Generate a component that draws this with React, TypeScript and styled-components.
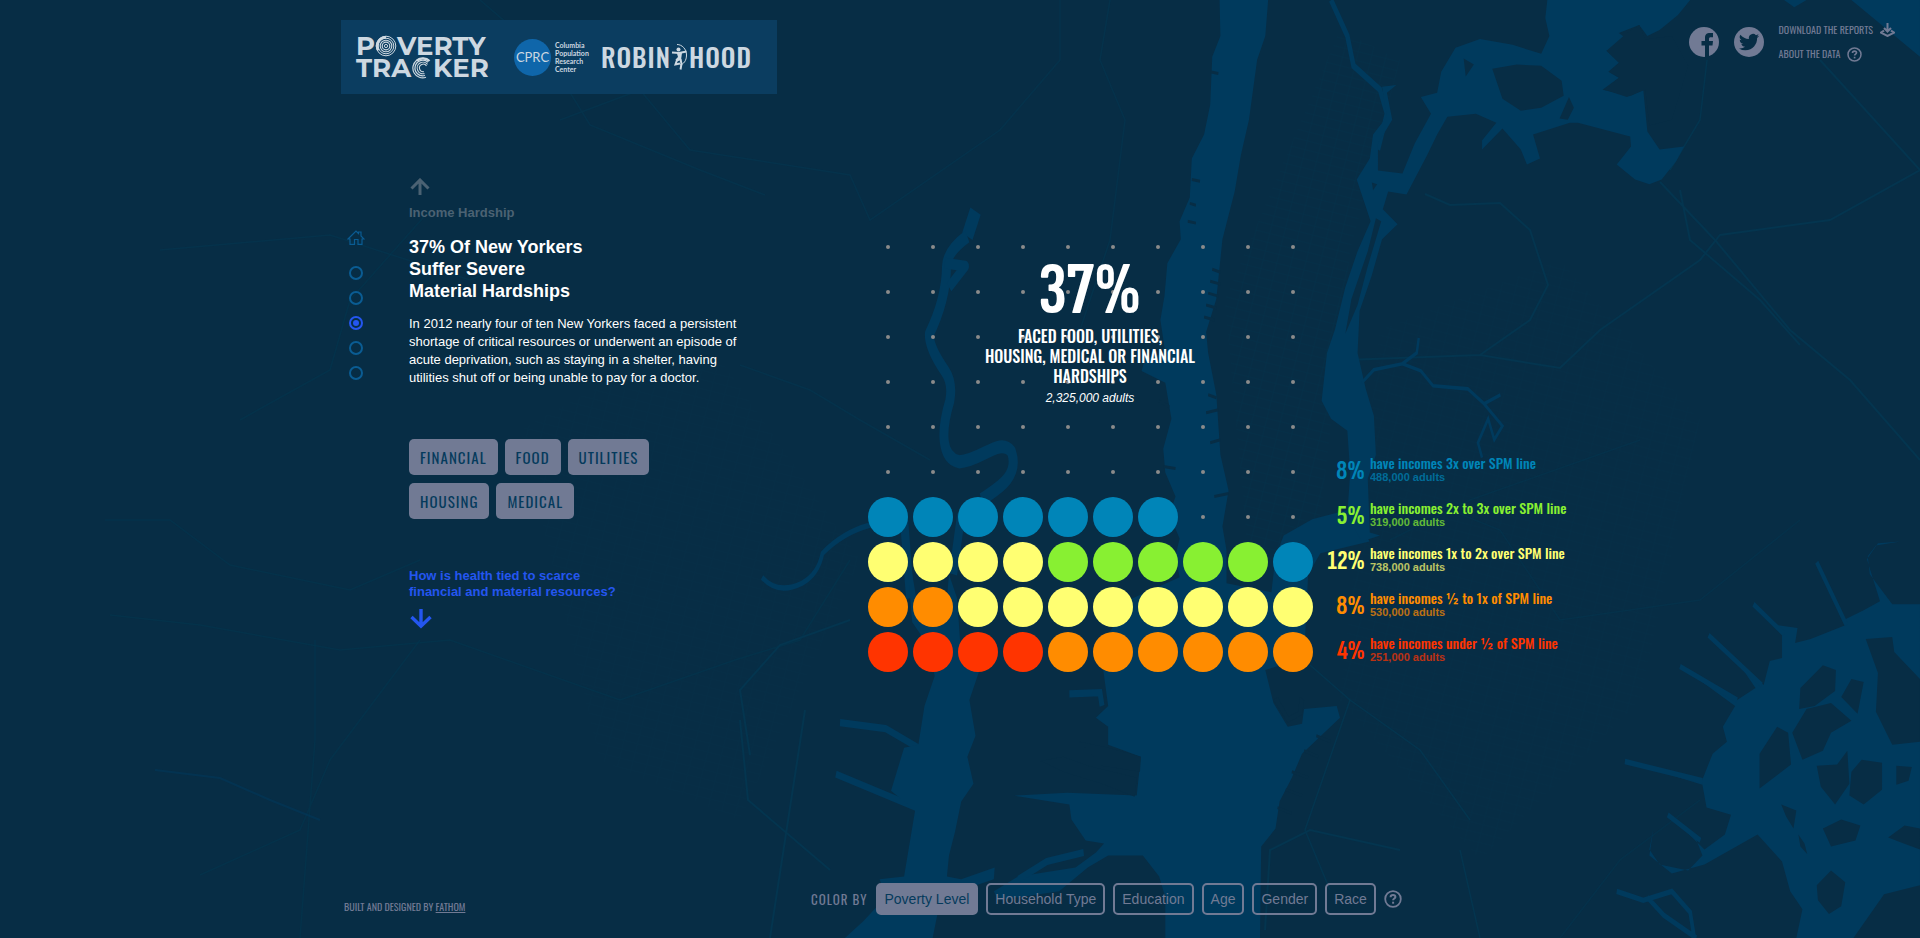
import React, { useState } from 'react';
import styled, { createGlobalStyle } from 'styled-components';

const ink = '#717a94';
const land = '#072d45';
const water = '#003a5d';
const road = '#04354f';
const sans = `"Liberation Sans", Arial, sans-serif`;
const condensed = `Oswald, "Roboto Condensed", "Liberation Sans", sans-serif`;
const numerals = `"Sofia Sans Extra Condensed", Oswald, "Roboto Condensed", sans-serif`;

const GlobalStyle = createGlobalStyle`
  *, *::before, *::after { box-sizing: border-box; }
  body { margin: 0; background: ${land}; font-family: ${sans}; color: #fff; }
  h1, h2, p, ul, ol { margin: 0; padding: 0; }
  ul, ol { list-style: none; }
  button { font: inherit; cursor: pointer; }
  a { color: inherit; text-decoration: none; }
`;

const Page = styled.div`
  position: relative;
  display: flex;
  flex-direction: column;
  min-height: 100vh;
  isolation: isolate;
  overflow: hidden;
`;

const MapBackdrop = styled.svg`
  position: absolute;
  inset: 0;
  z-index: -1;
  width: 100%;
  height: 100%;
`;

const Columns = styled.div`
  display: grid;
  grid-template-columns: 1fr minmax(0, 1238px) 1fr;
`;

const Header = styled(Columns).attrs({ as: 'header' })`
  align-items: start;
  padding-top: 20px;
`;

const Brands = styled.div`
  grid-column: 2;
  justify-self: start;
  display: flex;
  align-items: center;
  height: 74px;
  padding: 0 25px 0 15px;
  background: #0b3d60;
  color: #cdd8e1;
`;

const TrackerLogo = styled.a`
  display: block;
  width: 136px;
  margin-right: 22px;
  font: 700 26px/22px Montserrat, Lato, "Liberation Sans", sans-serif;
`;

const LogoLine = styled.span`
  display: flex;
  align-items: center;
`;

const Swirl = styled.svg`
  flex: none;
  width: 22px;
  height: 22px;
`;

const Columbia = styled.a`
  display: flex;
  align-items: center;
  gap: 4px;
  width: 87px;
`;

const Disc = styled.span`
  display: grid;
  place-items: center;
  flex: none;
  width: 37px;
  height: 37px;
  border-radius: 50%;
  background: #0f66aa;
  font: 400 13px/16px Lato, sans-serif;
`;

const DiscCaption = styled.span`
  font: 700 7px/8px Lato, sans-serif;
`;

const RobinHood = styled.a`
  display: flex;
  align-items: center;
  font: 500 26px/36px ${condensed};
  letter-spacing: 1px;
`;

const Archer = styled.svg`
  width: 18px;
  height: 28px;
`;

const TopNav = styled.nav`
  justify-self: end;
  display: flex;
  gap: 15px;
  padding-right: 25px;
  color: ${ink};
`;

const Social = styled.a`
  width: 30px;
  height: 30px;
  margin-top: 7px;
  svg { display: block; }
`;

const TopLinks = styled.ul`
  display: grid;
  gap: 8px;
  margin-top: 2px;
  font: 400 10px/16px ${condensed};
`;

const TopLink = styled.a`
  display: flex;
  align-items: center;
  gap: 7px;
  height: 16px;
`;

const Main = styled(Columns).attrs({ as: 'main' })`
  flex: 1;
  padding-top: 84px;
`;

const Stage = styled.div`
  grid-column: 2;
  display: grid;
  grid-template-columns: 68px minmax(360px, 456px) 450px minmax(264px, 1fr);
  align-items: start;
`;

const Steps = styled.ol`
  display: flex;
  flex-direction: column;
  align-items: center;
  gap: 11px;
  width: 30px;
  margin-top: 52px;
`;

const HomeItem = styled.li`
  height: 16px;
  margin-bottom: 9px;
`;

const Step = styled.a<{ $active?: boolean }>`
  display: grid;
  place-items: center;
  width: 14px;
  height: 14px;
  border: 2px solid ${p => (p.$active ? '#2456f0' : '#0a5c93')};
  border-radius: 50%;
  &::after {
    content: '';
    width: 6px;
    height: 6px;
    border-radius: 50%;
    background: ${p => (p.$active ? '#2456f0' : 'transparent')};
  }
`;

const Story = styled.article`
  display: flex;
  flex-direction: column;
  align-items: flex-start;
  max-width: 340px;
`;

const StepLink = styled.a<{ $tone: string }>`
  display: flex;
  flex-direction: column;
  gap: 9px;
  color: ${p => p.$tone};
  font-weight: 700;
  font-size: 13px;
  line-height: 16px;
  svg { display: block; margin-left: 1px; }
`;

const Title = styled.h1`
  margin-top: 15px;
  font-size: 18px;
  line-height: 22px;
`;

const Body = styled.p`
  margin-top: 13px;
  font-size: 13px;
  line-height: 18px;
  white-space: nowrap;
`;

const Topics = styled.div`
  display: flex;
  flex-wrap: wrap;
  gap: 8px 7px;
  max-width: 260px;
  margin: 52px 0 49px;
`;

const Topic = styled.button`
  height: 36px;
  padding: 0 11px;
  border: 0;
  border-radius: 5px;
  background: ${ink};
  color: #053a5c;
  font: 400 15px/36px ${condensed};
  letter-spacing: 1px;
`;

const Chart = styled.section`
  position: relative;
  margin-top: 46px;
`;

const DotGrid = styled.div`
  display: grid;
  grid-template-columns: repeat(10, 45px);
  grid-auto-rows: 45px;
  place-items: center;
`;

const Dot = styled.span<{ $color?: string }>`
  width: ${p => (p.$color ? 40 : 4)}px;
  height: ${p => (p.$color ? 40 : 4)}px;
  border-radius: 50%;
  background: ${p => p.$color ?? '#8b8b8b'};
`;

const Headline = styled.div`
  position: absolute;
  top: 31px;
  left: 0;
  right: 0;
  text-align: center;
`;

const BigNumber = styled.div`
  font: 700 75px/71px ${numerals};
`;

const Claim = styled.h2`
  font: 500 16px/20px ${condensed};
`;

const Adults = styled.p`
  font-size: 12px;
  line-height: 24px;
  font-style: italic;
`;

const Legend = styled.ul`
  display: grid;
  grid-auto-rows: 45px;
  margin-top: 270px;
`;

const LegendRow = styled.li<{ $color: string }>`
  display: grid;
  grid-template-columns: 50px 1fr;
  column-gap: 5px;
  align-items: center;
  color: ${p => p.$color};
`;

const Share = styled.strong`
  text-align: right;
  font: 700 28px/30px ${numerals};
`;

const Meaning = styled.span`
  display: block;
  font: 500 14px/16px ${condensed};
  white-space: nowrap;
`;

const Count = styled.span`
  display: block;
  margin-bottom: 4px;
  font: 700 11px/12px ${sans};
  opacity: 0.72;
`;

const Footer = styled(Columns).attrs({ as: 'footer' })`
  padding-bottom: 23px;
  color: ${ink};
`;

const FooterBar = styled.div`
  grid-column: 2;
  display: grid;
  grid-template-columns: 467px 1fr;
  align-items: center;
  padding-left: 3px;
`;

const Credit = styled.p`
  margin-top: 17px;
  font: 400 10px/16px ${condensed};
  a { text-decoration: underline; }
`;

const ColorBy = styled.div`
  display: flex;
  align-items: center;
  gap: 8px;
`;

const ColorLabel = styled.span`
  font: 400 13px/20px ${condensed};
  letter-spacing: 1px;
`;

const ColorButton = styled.button<{ $active: boolean }>`
  height: 32px;
  padding: 0 7px;
  border: 2px solid ${ink};
  border-radius: 5px;
  background: ${p => (p.$active ? ink : 'transparent')};
  color: ${p => (p.$active ? '#053a5c' : ink)};
  font: 400 14px/28px ${sans};
`;

const HelpButton = styled.button`
  width: 18px;
  height: 18px;
  padding: 0;
  border: 0;
  background: none;
  color: ${ink};
  svg { display: block; }
`;

const levels = [
  { color: '#ff3400', share: 4, text: 'have incomes under ½ of SPM line', adults: '251,000 adults' },
  { color: '#ff8c00', share: 8, text: 'have incomes ½ to 1x of SPM line', adults: '530,000 adults' },
  { color: '#ffff72', share: 12, text: 'have incomes 1x to 2x over SPM line', adults: '738,000 adults' },
  { color: '#88f032', share: 5, text: 'have incomes 2x to 3x over SPM line', adults: '319,000 adults' },
  { color: '#0085b8', share: 8, text: 'have incomes 3x over SPM line', adults: '488,000 adults' },
];

// One entry per percent, filled from the bottom row upwards.
const filled = levels.flatMap(l => Array<string>(l.share).fill(l.color));
const dots = Array.from({ length: 100 }, (_, i) => {
  const row = 9 - Math.floor(i / 10);
  return filled[row * 10 + (i % 10)];
});

const topics = ['FINANCIAL', 'FOOD', 'UTILITIES', 'HOUSING', 'MEDICAL'];
const modes = ['Poverty Level', 'Household Type', 'Education', 'Age', 'Gender', 'Race'];

function Help({ size }: { size: number }) {
  return (
    <svg width={size} height={size} viewBox="0 0 18 18" fill="none" stroke="currentColor" strokeWidth="2">
      <circle cx="9" cy="9" r="7.8" strokeWidth="1.8" />
      <path d="M6.6 7.2c0-1.5 1-2.3 2.4-2.3s2.4.8 2.4 2c0 1.6-2.3 1.6-2.3 3.4" />
      <path d="M9.1 11.7v2" />
    </svg>
  );
}

function Rings({ open }: { open?: boolean }) {
  return (
    <Swirl viewBox="0 0 22 22" fill="none" stroke="currentColor" aria-hidden="true">
      {open ? (
        <>
          <path d="M18 3.600A9.800 9.800 0 1 0 15 20.300" strokeWidth="1.200" />
          <path d="M17 5.200A7.800 7.800 0 1 0 14 18.500" strokeWidth="1.200" />
          <path d="M16.500 7.400A5.800 5.800 0 1 0 13.500 16.600" strokeWidth="1.100" />
          <path d="M15.500 9A3.800 3.800 0 1 0 13 14.700" strokeWidth="1.100" />
          <path d="M6 3.500A9.500 9.500 0 0 1 18.500 4" strokeWidth="2.400" />
        </>
      ) : (
        <>
          <circle cx="11" cy="11" r="9.800" strokeWidth="1" />
          <circle cx="11" cy="11" r="7.800" strokeWidth="1" />
          <circle cx="11" cy="11" r="5.800" strokeWidth="1.100" />
          <circle cx="11" cy="11" r="3.800" strokeWidth="1.200" />
          <circle cx="11" cy="11" r="1.600" strokeWidth="1" />
          <path d="M11 2.200A8.800 8.800 0 0 0 3.400 15.400" strokeWidth="2.600" />
        </>
      )}
    </Swirl>
  );
}

function CityMap() {
  return (
    <MapBackdrop viewBox="0 0 1920 938" preserveAspectRatio="xMidYMid slice" aria-hidden="true">
      <defs>
        <pattern id="streets" width="14" height="9" patternUnits="userSpaceOnUse" patternTransform="rotate(14)">
          <path d="M0 .5H14M.5 0V9" stroke="#053149" strokeWidth="1" fill="none" opacity=".7" />
        </pattern>
      </defs>
      <rect width="1920" height="938" fill={land} />
      <path fill="url(#streets)" d="M1225 300 1340 30 1400 60 1350 250 1320 520 1250 575Z" />
      <path fill="url(#streets)" d="M1380 330 1560 260 1700 420 1640 700 1480 860 1340 700Z" opacity=".6" />
      <path fill="url(#streets)" d="M520 430 700 330 860 560 740 820 600 760Z" opacity=".5" />
      <g fill="none" stroke={road} strokeWidth="1.5">
        <path d="M480 0 550 60 590 125 700 170 765 195M560 120 640 90 690 150 850 175 870 220 1000 130 1060 60 1060 0" opacity=".7" />
        <path d="M1110 0 1100 60 1125 120 1110 240 1080 330M740 365 810 390 860 420 930 460M160 250 330 235 470 280 560 245" opacity=".7" />
        <path d="M105 520 170 520 230 565 350 590 420 560M110 615 200 625 340 650 450 640 620 700 735 660 800 640 850 560" opacity=".6" />
        <path d="M240 420 330 370 350 300 430 210M200 875 300 830 330 760 420 640M315 640 315 740 300 938" opacity=".6" />
        <path d="M750 755 740 690 780 645 850 620M805 710 770 938M740 720 748 800 830 870" strokeWidth="2" />
        <path d="M1425 194 1450 205 1500 203 1530 230 1548 285 1530 320 1480 355M1345 360 1480 355 1560 368 1600 330 1700 260 1720 235 1830 220 1920 170" strokeWidth="2" />
        <path d="M1660 182 1715 240 1790 330 1850 380 1920 460M1680 190 1690 240 1760 300 1800 345M1820 60 1870 115 1920 170" strokeWidth="2" />
        <path d="M1707 60 1700 120 1670 170M1310 665 1350 700 1305 830 1330 890M1350 700 1420 750 1470 820M1480 938 1460 850" />
        <path d="M1425 500 1500 530 1560 620 1700 600 1800 520M1560 938 1620 860 1700 800M1390 540 1470 500 1640 440" opacity=".5" />
        <path d="M1265 930 1270 850 1310 830 1400 850" strokeWidth="2" />
      </g>
      <path d="M155 770 220 778 270 800 320 820" fill="none" stroke={water} strokeWidth="2" opacity=".5" />

      {/* Hackensack, Newark Bay, the Hudson and the harbor */}
      <g transform="translate(700 0) scale(.40816 .59821)" fill={water}>
        <g fill="none" stroke={water} strokeLinejoin="round">
          <path d="M675 353 655 395" strokeWidth="28" />
          <path d="M655 395Q605 420 604 445 603 500 562 558 560 580 600 620 620 640 612 670C590 720 590 765 635 772 690 770 735 730 763 755 785 800 720 820 690 835" strokeWidth="22" />
          <path d="M600 440 650 445 610 480" strokeWidth="18" />
          <path d="M152 965Q190 995 250 975 290 960 300 925 350 890 415 878L500 870" strokeWidth="9" />
          <path d="M500 870 515 1000M640 860 620 960" strokeWidth="20" />
          <path d="M343 1208 455 1218 535 1250M333 1294 530 1350" strokeWidth="12" />
        </g>
        <path d="M493 900 510 960 520 1040 560 1080 575 1130 550 1180 535 1245 500 1250 468 1322 527 1355 500 1465 440 1470 455 1500 400 1540 355 1568H570L590 1500 720 1470 722 1450 640 1470 605 1465 610 1430 625 1390 640 1340 670 1310 655 1265 675 1230 660 1170 685 1120 640 1100 630 1000 610 960 600 1040 540 1040 520 960Z" />
        <path d="M1273 0 1275 60 1255 95 1250 175 1235 225 1205 265 1200 330 1175 370 1178 400 1145 440 1138 495 1128 535 1140 590 1090 600 1082 620 1140 640 1155 700 1135 750 1140 790 1165 830 1150 860 1175 900 1165 930 1175 965 1060 1000 980 1080 1000 1180 970 1200 1000 1215 1000 1245 1080 1265 1070 1330 900 1325 770 1330 905 1345 910 1370 945 1405 990 1410 970 1425 920 1450 780 1465 720 1490 730 1505 880 1490 950 1450 1000 1430 1085 1430 1125 1465 1140 1500 1140 1568H1372L1375 1415 1410 1385 1420 1340 1450 1300 1475 1260 1568 1200 1560 1180 1480 1185 1475 1210 1440 1215 1405 1175 1385 1120 1480 1100 1490 960 1520 925 1640 905 1600 850 1500 868 1430 895 1410 930 1400 990 1290 975 1290 920 1280 880 1295 820 1275 760 1265 660 1245 590 1240 555 1265 500 1280 400 1310 320 1325 260 1345 200 1365 100 1385 60 1392 0Z" />
        <path d="M905 1160 980 1158 985 1180M780 1470 850 1440 940 1425" fill="none" stroke={water} strokeWidth="12" />
        <g fill={land}>
          <path d="M930 1240 1000 1250 1080 1265 1078 1290 985 1280ZM835 1272 890 1265 950 1280 1070 1300 1065 1332 985 1310 890 1290Z" />
          <path d="M1405 1170 1440 1208 1475 1195 1480 1170 1470 1165 1465 1190 1442 1198 1415 1165Z" />
        </g>
        <g stroke={land} strokeWidth="5" fill="none">
          <path d="M1255 450 1275 455M1250 470 1275 475M1245 490 1270 495M1240 510 1265 515M1235 530 1260 535M1240 690 1270 685M1245 660 1265 665M1250 740 1275 735M1260 830 1295 825" />
          <path d="M1205 300 1225 303M1200 340 1215 343M1195 370 1215 373M1150 680 1125 670M1135 780 1165 783M1150 860 1170 864M1250 120 1270 123" />
          <path d="M1450 1290 1490 1300M1435 1320 1475 1330M1415 1350 1450 1360M1480 1255 1515 1265M1510 1230 1545 1240" />
        </g>
      </g>

      {/* Harlem and East Rivers, the Sound and Jamaica Bay */}
      <g transform="translate(1280 0) scale(.40816 .59821)" fill={water}>
        <path d="M125 0 165 60 180 110 245 150 262 190 240 250" fill="none" stroke={water} strokeWidth="11" />
        <path d="M188 300 220 265 228 225 262 195 250 145 285 142 262 155 275 200 240 240 240 285 300 290 330 240 370 190 345 162 385 155 395 120 430 80 490 65 570 75 640 90 660 60 650 30 655 0H1005L975 25 930 50 900 60 880 42 830 55 860 70 800 85 830 105 805 120 830 130 790 150 860 160 890 150 900 220 930 250 990 245 970 270 935 300 905 308 870 300 825 275 860 245 858 228 730 205 710 205 620 225 637 265 605 275 590 250 545 215 495 250 495 235 530 205 480 190 410 195 385 225 360 260 310 325 265 320 252 350 288 375 250 400 225 460 195 520 190 590 210 650 230 695 235 760 215 800 220 890 245 895 200 905 165 860 172 790 165 720 125 700 102 670 115 590 135 550 160 480 190 420 222 370Z" />
        <path d="M1235 0 1260 12 1290 0ZM1400 0 1568 95V0Z" />
        <path d="M200 640 230 618 300 608 345 620 375 645 460 650 500 675 540 660M500 675 545 712 525 735 510 700 485 740 495 765M300 608 335 590 340 565" fill="none" stroke={water} strokeWidth="6" />
        <g fill={land}>
          <path d="M520 115 580 108 640 110 690 135 695 160 640 180 590 185 545 165ZM450 98 475 108 455 128ZM708 162 720 180 705 200 685 198Z" />
          <path d="M850 55 880 42 895 66 960 60 1000 110 960 200 905 210 895 150 850 162 795 150 832 130 805 120 832 105 800 85Z" />
          <path d="M160 558 175 500 215 420 235 365 248 370 215 445 190 510Z" />
          <path d="M225 305 238 308 228 318Z" />
        </g>
        <path d="M1568 1010 1500 1010 1445 960 1440 930 1460 912 1520 905 1465 908 1438 935 1470 1005 1430 1020 1385 1035 1315 940 1385 1045 1300 1068 1262 1075 1268 1050 1220 1045 1160 1008 1230 1060 1230 1100 1200 1105 1185 1145 1050 1060 1140 1125 1165 1150 1120 1170 980 1113 1115 1180 1085 1215 1095 1240 1060 1260 1035 1303 845 1272 1035 1312 1045 1350 1105 1362 1090 1395 1040 1420 950 1360 1015 1395 1035 1430 1000 1455 930 1445 905 1420 915 1385 905 1430 960 1460 1040 1445 1170 1395 1230 1440 1250 1490 1280 1520 1265 1568H1405L1480 1495 1568 1480Z" />
        <path d="M825 1490 890 1505 960 1490 1005 1525 1015 1568M900 1500 940 1530 1020 1568M845 1273 1035 1305M980 1114 1120 1170M1050 1062 1180 1145M1160 1010 1235 1060M1315 940 1388 1045M950 1362 1030 1405" fill="none" stroke={water} strokeWidth="9" />
        <g fill={land}>
          <path d="M1275 1150 1330 1112 1362 1120 1360 1155 1310 1180 1272 1185ZM1375 1165 1400 1135 1430 1140 1415 1193Z" />
          <path d="M1175 1260 1218 1215 1245 1225 1252 1278 1175 1318ZM1255 1225 1290 1185 1350 1175 1400 1205 1350 1225 1330 1255 1280 1270Z" />
          <path d="M1315 1280 1365 1278 1390 1255 1395 1310 1360 1345 1325 1315ZM1400 1290 1425 1270 1475 1275 1475 1320 1430 1345 1395 1330Z" />
          <path d="M1435 1068 1500 1065 1505 1090 1568 1135V1240L1500 1245 1460 1190 1465 1125Z" />
          <path d="M1510 1280 1548 1282 1540 1305 1510 1312ZM1330 1385 1375 1370 1422 1380 1410 1405 1350 1415ZM1490 1400 1530 1380 1568 1385V1420L1520 1408Z" />
          <path d="M1315 1480 1350 1455 1385 1475 1375 1515 1345 1528 1318 1505ZM1228 1345 1265 1355 1258 1385 1240 1365ZM1270 1395 1285 1410 1292 1428 1275 1415Z" />
        </g>
      </g>
    </MapBackdrop>
  );
}

export default function App() {
  const [mode, setMode] = useState('Poverty Level');
  return (
    <Page>
      <GlobalStyle />
      <CityMap />
      <Header>
        <Brands>
          <TrackerLogo href="#" aria-label="Poverty Tracker">
            <LogoLine>P<Rings />VERTY</LogoLine>
            <LogoLine>TRA<Rings open />KER</LogoLine>
          </TrackerLogo>
          <Columbia href="#">
            <Disc>CPRC</Disc>
            <DiscCaption>Columbia<br />Population<br />Research<br />Center</DiscCaption>
          </Columbia>
          <RobinHood href="#">
            ROBIN
            <Archer viewBox="0 0 18 28" fill="none" stroke="currentColor" aria-hidden="true">
              <path d="M6 1.500C11 1.500 15.500 6 15.500 12s-3 9-6.500 10" strokeWidth="1" />
              <circle cx="7.500" cy="6.500" r="2" fill="currentColor" stroke="none" />
              <path d="M1 9.500 8 10 15.500 8.500" strokeWidth="1.800" />
              <path d="M5.500 9 11 10 10 17 6 18.500 4.500 16.500 7 14z" fill="currentColor" stroke="none" />
              <path d="M6 17 4.500 21.500 9 20.500M9.500 16 10.500 21 9.500 26.500" strokeWidth="2" />
            </Archer>
            HOOD
          </RobinHood>
        </Brands>
        <TopNav>
          <Social href="#" aria-label="Facebook">
            <svg width="30" height="30" viewBox="0 0 30 30">
              <circle cx="15" cy="15" r="15" fill="currentColor" />
              <path d="M16 30V18.500h-3.500v-4.500H16v-3.200C16 7.300 18 6 20.800 6H24v4.300h-2.200c-1.300 0-1.800.5-1.800 1.600V14h4l-.5 4.500H20V30z" fill={land} />
            </svg>
          </Social>
          <Social href="#" aria-label="Twitter">
            <svg width="30" height="30" viewBox="0 0 30 30">
              <circle cx="15" cy="15" r="15" fill="currentColor" />
              <path
                transform="translate(5 5) scale(.84)"
                d="M23.950 4.570a10 10 0 0 1-2.820.78 4.960 4.960 0 0 0 2.160-2.730 9.900 9.900 0 0 1-3.120 1.190 4.920 4.920 0 0 0-8.380 4.480A13.930 13.930 0 0 1 1.640 3.160a4.920 4.920 0 0 0 1.520 6.570 4.900 4.900 0 0 1-2.230-.61v.06a4.920 4.920 0 0 0 3.950 4.830 5 5 0 0 1-2.210.08 4.940 4.940 0 0 0 4.600 3.420A9.870 9.870 0 0 1 0 19.540a13.990 13.990 0 0 0 7.550 2.210c9.050 0 14-7.500 14-13.990 0-.21 0-.42-.02-.63a9.940 9.940 0 0 0 2.420-2.560z"
                fill={land}
              />
            </svg>
          </Social>
          <TopLinks>
            <li>
              <TopLink href="#">
                DOWNLOAD THE REPORTS
                <svg width="15" height="14" viewBox="0 0 15 14" fill="none" stroke="currentColor" strokeWidth="2">
                  <path d="M7.500 0v8M4 5l3.500 3.500L11 5M4 7.600 1 9.600 7.500 13 14 9.600 11 7.600" />
                </svg>
              </TopLink>
            </li>
            <li>
              <TopLink href="#">ABOUT THE DATA <Help size={15} /></TopLink>
            </li>
          </TopLinks>
        </TopNav>
      </Header>

      <Main>
        <Stage>
          <Steps>
            <HomeItem>
              <a href="#" aria-label="Home">
                <svg width="18" height="16" viewBox="0 0 18 16" fill="none" stroke="#0a5c93" strokeWidth="1.200">
                  <path d="M1 9 9 1l2.500 2.500V2H14v4l3 3h-2v5.400h-4V9.500H7.500v4.900H3V9z" />
                </svg>
              </a>
            </HomeItem>
            {[1, 2, 3, 4, 5].map(n => (
              <li key={n}><Step href="#" $active={n === 3} aria-label={`Step ${n}`} /></li>
            ))}
          </Steps>

          <Story>
            <StepLink href="#" $tone="#4b6273">
              <svg width="20" height="18" viewBox="0 0 20 18" fill="none" stroke="currentColor" strokeWidth="3">
                <path d="M10 17V2M1.500 10.500 10 2l8.500 8.500" />
              </svg>
              Income Hardship
            </StepLink>
            <Title>37% Of New Yorkers<br />Suffer Severe<br />Material Hardships</Title>
            <Body>
              In 2012 nearly four of ten New Yorkers faced a persistent<br />
              shortage of critical resources or underwent an episode of<br />
              acute deprivation, such as staying in a shelter, having<br />
              utilities shut off or being unable to pay for a doctor.
            </Body>
            <Topics>
              {topics.map(t => <Topic key={t} type="button">{t}</Topic>)}
            </Topics>
            <StepLink href="#" $tone="#2456f0">
              <span>How is health tied to scarce<br />financial and material resources?</span>
              <svg width="22" height="20" viewBox="0 0 22 20" fill="none" stroke="currentColor" strokeWidth="3.400">
                <path d="M11 0v17M1.500 8 11 17.200 20.500 8" />
              </svg>
            </StepLink>
          </Story>

          <Chart>
            <DotGrid>{dots.map((c, i) => <Dot key={i} $color={c} />)}</DotGrid>
            <Headline>
              <BigNumber>37%</BigNumber>
              <Claim>FACED FOOD, UTILITIES,<br />HOUSING, MEDICAL OR FINANCIAL<br />HARDSHIPS</Claim>
              <Adults>2,325,000 adults</Adults>
            </Headline>
          </Chart>

          <Legend>
            {[...levels].reverse().map(l => (
              <LegendRow key={l.text} $color={l.color}>
                <Share>{l.share}%</Share>
                <span>
                  <Meaning>{l.text}</Meaning>
                  <Count>{l.adults}</Count>
                </span>
              </LegendRow>
            ))}
          </Legend>
        </Stage>
      </Main>

      <Footer>
        <FooterBar>
          <Credit>BUILT AND DESIGNED BY <a href="#">FATHOM</a></Credit>
          <ColorBy role="group" aria-label="Color by">
            <ColorLabel>COLOR BY</ColorLabel>
            {modes.map(m => (
              <ColorButton key={m} type="button" $active={m === mode} onClick={() => setMode(m)}>{m}</ColorButton>
            ))}
            <HelpButton type="button" aria-label="Help"><Help size={18} /></HelpButton>
          </ColorBy>
        </FooterBar>
      </Footer>
    </Page>
  );
}
